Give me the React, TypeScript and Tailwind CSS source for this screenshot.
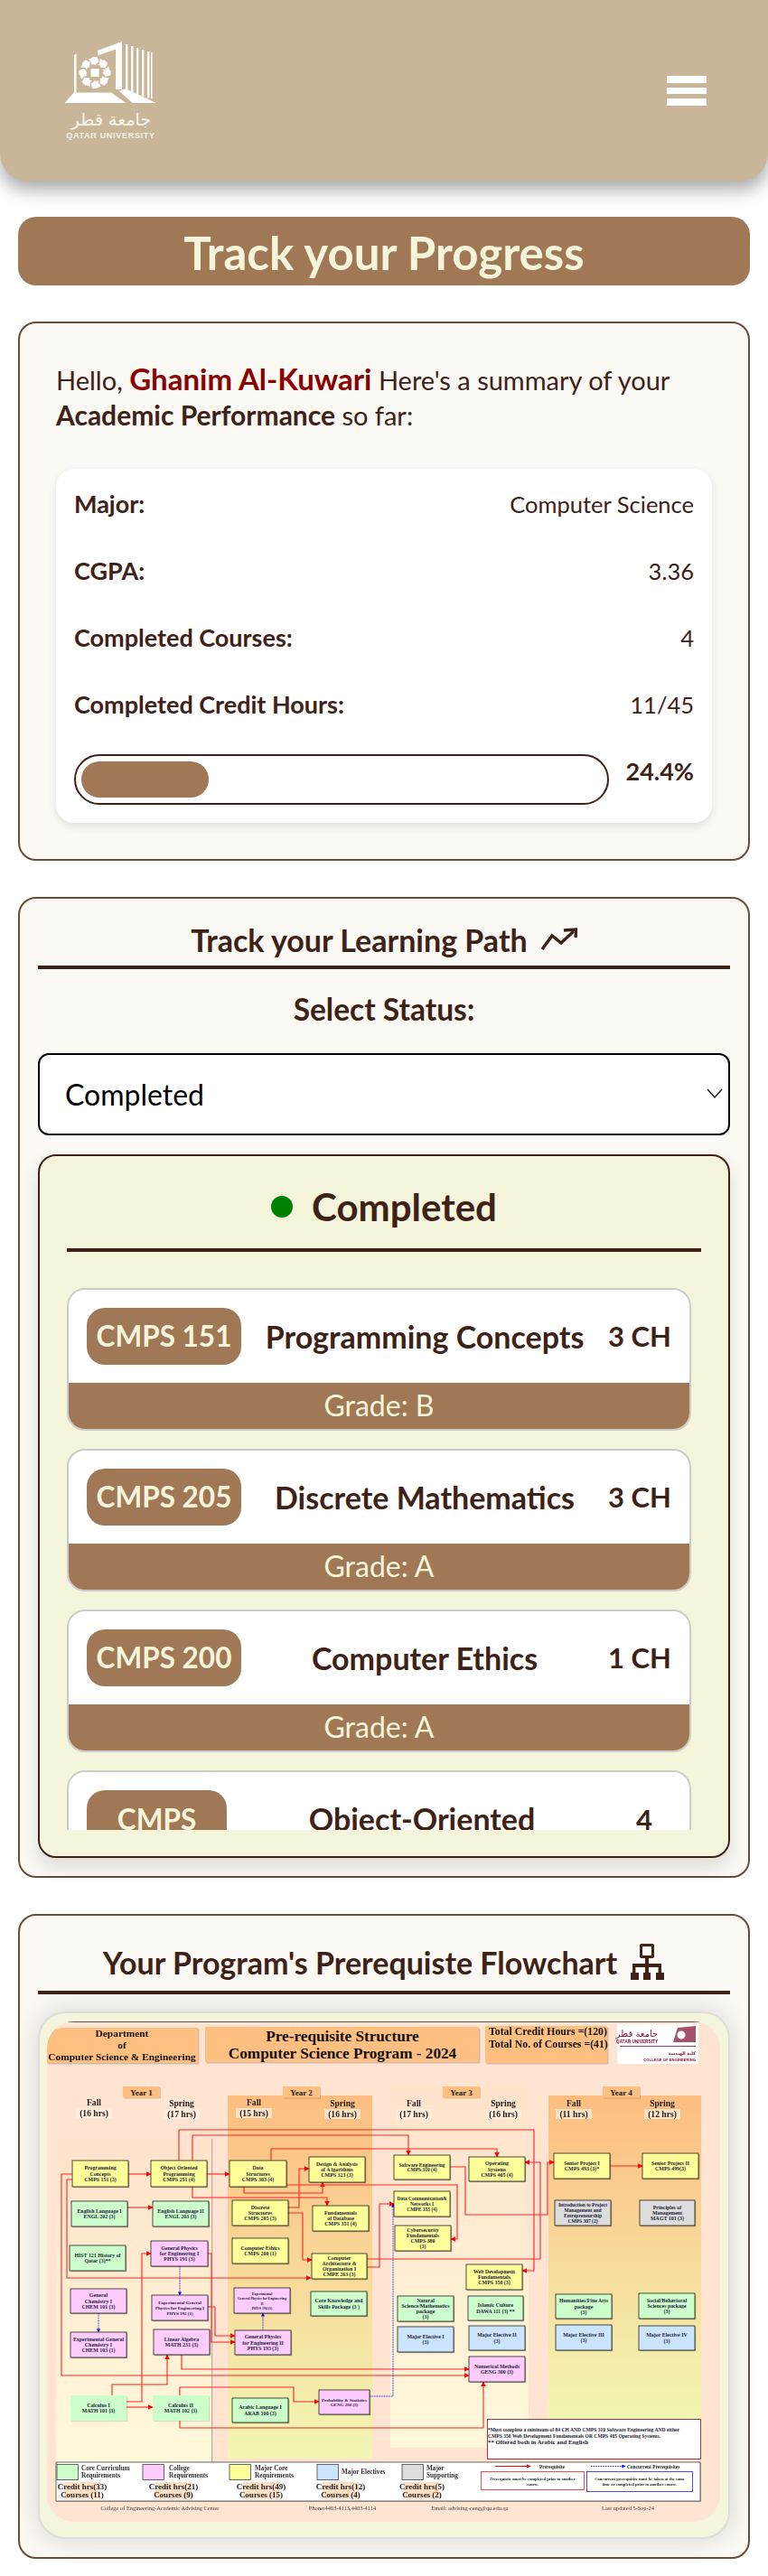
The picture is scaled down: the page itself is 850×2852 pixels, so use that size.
const courses = [
  { code: "CMPS 151", title: "Programming Concepts", ch: "3 CH", grade: "B" },
  { code: "CMPS 205", title: "Discrete Mathematics", ch: "3 CH", grade: "A" },
  { code: "CMPS 200", title: "Computer Ethics", ch: "1 CH", grade: "A" },
];

const stats = [
  { label: "Major:", value: "Computer Science" },
  { label: "CGPA:", value: "3.36" },
  { label: "Completed Courses:", value: "4" },
  { label: "Completed Credit Hours:", value: "11/45" },
];

const Y = "#FFFF99";
const G = "#CCFFCC";
const P = "#FFCCFF";
const B = "#CCE5FF";
const K = "#DDDDDD";

type Box = [number, number, number, number, string, string[], number?];

const boxes: Box[] = [
  [80, 2393, 142, 2422, Y, ["Programming", "Concepts", "CMPS 151 (3)"]],
  [167, 2393, 229, 2422, Y, ["Object Oriented", "Programming", "CMPS 251 (4)"]],
  [254, 2393, 317, 2422, Y, ["Data", "Structures", "CMPS 303 (4)"]],
  [342, 2389, 404, 2417, Y, ["Design & Analysis", "of A lgorithms", "CMPS 323 (3)"]],
  [79, 2438, 141, 2466, G, ["English Language I", "ENGL 202 (3)"]],
  [169, 2438, 231, 2466, G, ["English Language II", "ENGL 203 (3)"]],
  [257, 2437, 319, 2465, Y, ["Discrete", "Structures", "CMPS 205 (3)"]],
  [346, 2443, 408, 2471, Y, ["Fundamentals", "of Database", "CMPS 351 (4)"]],
  [77, 2487, 139, 2515, G, ["HIST 121 History of", "Qatar (3)**"]],
  [167, 2482, 230, 2510, P, ["General Physics", "for Engineering I", "PHYS 191 (3)"]],
  [257, 2479, 319, 2507, Y, ["Computer Ethics", "CMPS 200 (1)"]],
  [345, 2496, 406, 2524, Y, ["Computer", "Architecture &", "Organization I", "CMPE 263 (3)"]],
  [78, 2535, 140, 2562, P, ["General", "Chemistry I", "CHEM 101 (3)"]],
  [168, 2542, 230, 2570, P, ["Experimental General", "Physics for Engineering I", "PHYS 192 (1)"], 5],
  [259, 2534, 321, 2562, P, ["Experimental", "General Physics for Engineering", "II", "PHYS 194 (1)"], 3.9],
  [344, 2538, 406, 2565, G, ["Core Knowledge and", "Skills Package (3 )"]],
  [78, 2583, 140, 2611, P, ["Experimental General", "Chemistry I", "CHEM 103 (1)"]],
  [170, 2580, 232, 2608, P, ["Linear Algebra", "MATH 231 (3)"]],
  [260, 2581, 322, 2608, P, ["General Physics", "for Engineering II", "PHYS 193 (3)"]],
  [257, 2656, 319, 2683, G, ["Arabic Language I", "ARAB 100 (3)"]],
  [353, 2647, 409, 2674, P, ["Probability & Statistics", "GENG 200 (3)"], 5],
  [436, 2387, 498, 2414, Y, ["Software Engineering", "CMPS 310 (4)"], 5.5],
  [519, 2389, 581, 2416, Y, ["Operating", "Systems", "CMPS 405 (4)"]],
  [613, 2385, 675, 2413, Y, ["Senior Project I", "CMPS 493 (3)*"]],
  [711, 2385, 773, 2413, Y, ["Senior Project II", "CMPS 499(3)"]],
  [436, 2427, 498, 2455, Y, ["Data Communication&", "Networks I", "CMPE 355 (4)"], 5.5],
  [614, 2437, 676, 2465, K, ["Introduction to Project", "Management and", "Entrepreneurship", "CMPS 307 (2)"], 5.5],
  [708, 2437, 769, 2465, K, ["Principles of", "Management", "MAGT 101 (3)"]],
  [437, 2465, 499, 2493, Y, ["Cybersecurity", "Fundamentals", "CMPS 380", "(3)"]],
  [516, 2508, 578, 2536, Y, ["Web Development", "Fundamentals", "CMPS 350 (3)"]],
  [440, 2543, 502, 2571, G, ["Natural", "Science/Mathematics", "package", "(3)"]],
  [518, 2543, 579, 2570, G, ["Islamic Culture", "DAWA 111 (3) **"]],
  [615, 2541, 677, 2568, G, ["Humanities/Fine Arts", "package", "(3)"]],
  [707, 2540, 769, 2568, G, ["Social/Behavioral", "Sciences package", "(3)"]],
  [440, 2577, 502, 2605, B, ["Major Elective  I", "(3)"]],
  [519, 2576, 581, 2603, B, ["Major Elective  II", "(3)"]],
  [615, 2575, 677, 2603, B, ["Major Elective  III", "(3)"]],
  [707, 2576, 769, 2603, B, ["Major Elective  IV", "(3)"]],
  [519, 2610, 581, 2638, P, ["Numerical Methods", "GENG 300 (3)"]],
];

const softBoxes: Box[] = [
  [78, 2653, 140, 2681, G, ["Calculus I", "MATH 101 (3)"]],
  [169, 2653, 231, 2681, G, ["Calculus II", "MATH 102 (3)"]],
];

const redLines = [
  "142,2408 167,2408",
  "229,2408 254,2408",
  "141,2445 169,2445",
  "80,2408 68,2408 68,2631 519,2631",
  "80,2414 74,2414 74,2523 344,2523",
  "198,2393 198,2359 591,2359 591,2515 578,2515",
  "213,2393 213,2365 452,2365 452,2387",
  "213,2422 213,2434 362,2434 362,2443",
  "300,2393 300,2380 550,2380 550,2389",
  "270,2422 270,2429 357,2429 357,2417",
  "317,2420 506,2420 506,2480 499,2480",
  "319,2445 331,2445 331,2402 342,2402",
  "319,2451 335,2451 335,2503 345,2503",
  "406,2511 420,2511 420,2441 436,2441",
  "406,2502 598,2502 598,2395 581,2395",
  "498,2400 515,2400 515,2453 606,2453 606,2395 613,2395",
  "230,2496 234,2496 234,2594 260,2594",
  "230,2555 238,2555 238,2587 260,2587",
  "201,2608 201,2624 519,2624",
  "140,2660 157,2660 157,2496 167,2496",
  "124,2653 124,2641 185,2641 185,2608",
  "140,2666 169,2666",
  "199,2653 199,2644 325,2644 325,2660 353,2660",
  "199,2681 199,2689 535,2689 535,2638",
  "675,2399 711,2399",
];

const blueLines = [
  "199,2510 199,2542",
  "109,2562 109,2583",
  "291,2581 291,2562",
  "409,2654 435,2654 435,2441",
];

const semesters = [
  { x: 104, top: "Fall", hrs: "(16 hrs)", d: 0 },
  { x: 201, top: "Spring", hrs: "(17 hrs)", d: 1 },
  { x: 281, top: "Fall", hrs: "(15 hrs)", d: 0 },
  { x: 379, top: "Spring", hrs: "(16 hrs)", d: 1 },
  { x: 458, top: "Fall", hrs: "(17 hrs)", d: 1 },
  { x: 557, top: "Spring", hrs: "(16 hrs)", d: 1 },
  { x: 635, top: "Fall", hrs: "(11 hrs)", d: 1 },
  { x: 733, top: "Spring", hrs: "(12 hrs)", d: 1 },
];

const legend = [
  { x: 63, color: G, t: ["Core Curriculum", "Requirements"], tx: 90, c: 91, hrs: "Credit hrs(33)", n: "Courses (11)" },
  { x: 158, color: P, t: ["College", "Requirements"], tx: 187, c: 192, hrs: "Credit hrs(21)", n: "Courses (9)" },
  { x: 254, color: Y, t: ["Major Core", "Requirements"], tx: 282, c: 289, hrs: "Credit hrs(49)", n: "Courses (15)" },
  { x: 351, color: B, t: ["Major Electives"], tx: 378, c: 377, hrs: "Credit hrs(12)", n: "Courses (4)" },
  { x: 445, color: K, t: ["Major", "Supporting"], tx: 472, c: 467, hrs: "Credit hrs(5)", n: "Courses (2)" },
];

function FlowBox({ box, soft }: { box: Box; soft?: boolean }) {
  const [x1, y1, x2, y2, fill, lines, size] = box;
  const step = Math.max((size ?? 5.9) + 0.4, 5.6);
  const cy = (y1 + y2) / 2;
  return (
    <g>
      <rect x={x1 + 1.2} y={y1 + 1.2} width={x2 - x1} height={y2 - y1} fill="#000" opacity={soft ? 0.12 : 0.3} />
      <rect x={x1} y={y1} width={x2 - x1} height={y2 - y1} fill={fill} stroke={soft ? "none" : "#222"} strokeWidth={0.8} />
      {lines.map((line, i) => (
        <text
          key={line}
          x={(x1 + x2) / 2}
          y={cy + (i - (lines.length - 1) / 2) * step + 2}
          textAnchor="middle"
          fontSize={size ?? 5.9}
          fontWeight={700}
          fill="#1c1c3a"
        >
          {line}
        </text>
      ))}
    </g>
  );
}

function Flowchart() {
  return (
    <svg
      viewBox="52 2239 745 554"
      className="block h-[554px] w-[745px] rounded-[30px] blur-[0.3px]"
      fontFamily="'Liberation Serif', serif"
    >
      <defs>
        <linearGradient id="y1" x1="0" y1="0" x2="0" y2="1">
          <stop offset="0" stopColor="#FFE3CB" />
          <stop offset="1" stopColor="#FFF9DA" />
        </linearGradient>
        <linearGradient id="y2" x1="0" y1="0" x2="0" y2="1">
          <stop offset="0" stopColor="#FDBD80" />
          <stop offset="1" stopColor="#F2F7B4" />
        </linearGradient>
        <marker id="red" markerWidth="5" markerHeight="5" refX="4.5" refY="2.5" orient="auto">
          <path d="M0 0 L5 2.5 L0 5 Z" fill="#F00" />
        </marker>
        <marker id="blue" markerWidth="5" markerHeight="5" refX="4.5" refY="2.5" orient="auto">
          <path d="M0 0 L5 2.5 L0 5 Z" fill="#00F" />
        </marker>
      </defs>

      <rect x="52" y="2239" width="745" height="554" fill="#FFE4D1" />
      <line x1="72" y1="2239.4" x2="775" y2="2239.4" stroke="#333" strokeWidth="0.9" />

      <rect x="62" y="2369" width="172" height="358" fill="url(#y1)" />
      <rect x="234" y="2369" width="1.2" height="358" fill="#000" opacity="0.25" />
      <rect x="252" y="2321" width="160" height="402" fill="url(#y2)" />
      <rect x="432" y="2309" width="153" height="402" fill="url(#y1)" />
      <rect x="607" y="2321" width="169" height="359" fill="url(#y2)" />

      <rect x="53.5" y="2247.5" width="167" height="39" fill="#000" opacity="0.18" />
      <path d="M52 2285 V2264 Q52 2246 72 2246 H219 V2285 Z" fill="#FFBF80" />
      <g fontWeight={700} fontSize="11.4" textAnchor="middle" fill="#111">
        <text x="135" y="2256">Department</text>
        <text x="135" y="2269">of</text>
        <text x="135" y="2282">Computer Science &amp; Engineering</text>
      </g>

      <rect x="228.5" y="2246.5" width="303" height="39" fill="#000" opacity="0.18" />
      <rect x="227" y="2245" width="303" height="39" fill="#FFBF80" />
      <g fontWeight={700} fontSize="17.2" textAnchor="middle" fill="#111">
        <text x="379" y="2261">Pre-requisite Structure</text>
        <text x="379" y="2280">Computer Science Program - 2024</text>
      </g>

      <rect x="538.5" y="2245.5" width="135" height="41" fill="#000" opacity="0.18" />
      <rect x="537" y="2244" width="135" height="41" fill="#FFBF80" />
      <g fontWeight={700} fontSize="11.8" fill="#111">
        <text x="541" y="2254">Total Credit Hours =(120)</text>
        <text x="541" y="2268">Total No. of Courses =(41)</text>
      </g>

      <rect x="683" y="2242" width="90" height="44" fill="#FFF" />
      <text x="705" y="2256" textAnchor="middle" fontSize="10" fill="#8A1538" fontFamily="'DejaVu Sans', sans-serif">جامعة قطر</text>
      <text x="705" y="2262.5" textAnchor="middle" fontSize="4.8" fill="#8A1538" fontWeight={700} fontFamily="'Liberation Sans', sans-serif">QATAR UNIVERSITY</text>
      <path d="M745 2262 L750 2246 L770 2244 V2262 Z" fill="#8A1538" opacity="0.75" />
      <circle cx="754" cy="2254" r="4.5" fill="#FFF" />
      <rect x="686" y="2266" width="84" height="0.8" fill="#8A1538" />
      <text x="770" y="2276" textAnchor="end" fontSize="4.8" fill="#8A1538" fontWeight={700} fontFamily="'DejaVu Sans', sans-serif">كلية الهندسة</text>
      <text x="770" y="2283" textAnchor="end" fontSize="4.2" fill="#8A1538" fontWeight={700} fontFamily="'Liberation Sans', sans-serif">COLLEGE OF ENGINEERING</text>

      {[
        { x: 136, t: "Year 1" },
        { x: 313, t: "Year 2" },
        { x: 490, t: "Year 3" },
        { x: 667, t: "Year 4" },
      ].map((y) => (
        <g key={y.t}>
          <rect x={y.x + 1} y="2312" width="41" height="12.5" fill="#000" opacity="0.15" />
          <rect x={y.x} y="2311" width="41" height="12.5" fill="#FFBF80" />
          <text x={y.x + 20.5} y="2320.5" textAnchor="middle" fontSize="9" fontWeight={700} fill="#222">{y.t}</text>
        </g>
      ))}

      {semesters.map((s) => (
        <g key={s.x} fontWeight={700} fontSize="9.6" textAnchor="middle" fill="#222">
          <rect x={s.x - 20} y={2335 + s.d} width="40" height="11" fill="#FFEEDD" opacity="0.75" />
          <text x={s.x} y={2332 + s.d}>{s.top}</text>
          <text x={s.x} y={2343.5 + s.d}>{s.hrs}</text>
        </g>
      ))}

      <g fill="none" stroke="#F22" strokeWidth="1.1">
        {redLines.map((pts) => (
          <polyline key={pts} points={pts} markerEnd="url(#red)" />
        ))}
      </g>
      <g fill="none" stroke="#00F" strokeWidth="0.8" strokeDasharray="1 0.6">
        {blueLines.map((pts) => (
          <polyline key={pts} points={pts} markerEnd="url(#blue)" />
        ))}
      </g>

      {boxes.map((b) => (
        <FlowBox key={b[5][0] + b[0]} box={b} />
      ))}
      {softBoxes.map((b) => (
        <FlowBox key={b[5][0]} box={b} soft />
      ))}

      <rect x="539.5" y="2679.5" width="236" height="44" fill="#FFF" stroke="#A0202A" strokeWidth="0.9" />
      <g fontWeight={700} fill="#1c1c3a">
        <text x="540" y="2693" fontSize="5.6">*Must complete a minimum of 84 CH AND CMPS 310 Software Engineering AND either</text>
        <text x="540" y="2699.5" fontSize="5.6">CMPS 350 Web Development Fundamentals OR CMPS 405 Operating Systems.</text>
        <text x="540" y="2706.5" fontSize="6.8">** Offered both in Arabic and English</text>
      </g>

      <rect x="63" y="2728" width="713" height="43" fill="#000" opacity="0.25" />
      <rect x="62" y="2727" width="713" height="43" fill="#FFF" stroke="#444" strokeWidth="0.8" />
      {legend.map((l) => (
        <g key={l.x}>
          <rect x={l.x} y="2729.5" width="23.5" height="17" fill={l.color} stroke="#444" strokeWidth="0.8" />
          <g fontWeight={700} fontSize="7.2" fill="#333">
            {l.t.map((t, i) => (
              <text key={t} x={l.tx} y={(l.t.length === 1 ? 2740 : 2736) + i * 8}>{t}</text>
            ))}
          </g>
          <rect x={l.c - 20} y="2749" width="40" height="19" fill="#FFE0C4" />
          <g fontWeight={700} fontSize="9" textAnchor="middle" fill="#222">
            <text x={l.c} y="2756.5">{l.hrs}</text>
            <text x={l.c} y="2765.5">{l.n}</text>
          </g>
        </g>
      ))}

      <polyline points="548,2731.5 587,2731.5" stroke="#F00" strokeWidth="1" markerEnd="url(#red)" />
      <text x="597" y="2734" fontSize="5.4" fontWeight={700} fill="#222">Prerequisite</text>
      <polyline points="654,2731.5 692,2731.5" stroke="#00F" strokeWidth="0.8" strokeDasharray="1 0.6" markerEnd="url(#blue)" />
      <text x="694" y="2733.5" fontSize="5.4" fontWeight={700} fill="#222">Concurrent Prerequisites</text>
      <rect x="532.5" y="2737.5" width="114" height="20" fill="#FFF" stroke="#E22" strokeWidth="0.8" />
      <g fontSize="4.6" fontWeight={700} textAnchor="middle" fill="#222">
        <text x="589.5" y="2747">Prerequisite must be completed prior to another</text>
        <text x="589.5" y="2753">course.</text>
      </g>
      <rect x="649.5" y="2737.5" width="117" height="22" fill="#FFF" stroke="#22E" strokeWidth="0.8" />
      <g fontSize="4.6" fontWeight={700} textAnchor="middle" fill="#222">
        <text x="708" y="2747">Concurrent prerequisite must be taken at the same</text>
        <text x="708" y="2753">time or completed prior to another course.</text>
      </g>

      <g fontSize="6.4" textAnchor="middle" fill="#444">
        <text x="177" y="2780">College of Engineering-Academic Advising Center</text>
        <text x="379" y="2780">Phone:4403-4113,4403-4114</text>
        <text x="520" y="2780">Email: advising-ceng@qu.edu.qa</text>
        <text x="695" y="2780">Last updated 5-Sep-24</text>
      </g>
    </svg>
  );
}

function Logo() {
  const spokes = [0, 45, 90, 135, 180, 225, 270, 315];
  return (
    <svg viewBox="70 45 106 112" className="h-[112px] w-[106px]" fill="#FFF">
      <path d="M71.7 115 L81.7 103.5 L123.3 103.5 L139.3 115 Z" />
      <path d="M82 62 L84.5 60.5 V103.5 H82 Z" />
      <path d="M108 57 L135 47 V100 L128 100 V55.5 L108 62.5 Z" />
      <path d="M131.7 101.7 L139.3 99.3 L172.7 115 L146.7 115 Z" />
      {[139, 145, 151, 157, 163].map((x, i) => (
        <path key={x} d={`M${x} ${50 + i * 2} h2.4 V${103 + i * 1.6} h-2.4 Z`} />
      ))}
      <path d="M167 59 h1.5 V110 h-1.5 Z" />
      <g transform="translate(105 81.5)">
        {spokes.map((a) => (
          <g key={a} transform={`rotate(${a})`}>
            <path d="M-2.6 -17.5 L2.6 -17.5 L4.6 -12 L0 -8.6 L-4.6 -12 Z" />
            <path d="M5.4 -15.6 L9.4 -13.8 L7 -8 L3.4 -8.4 L5.6 -11 Z" />
          </g>
        ))}
        <rect x="-4.5" y="-4.5" width="9" height="9" />
      </g>
      <text x="123" y="140" textAnchor="middle" fontSize="19" fontFamily="'DejaVu Sans', sans-serif" opacity="0.85">جامعة قطر</text>
      <text x="122.5" y="154" textAnchor="middle" fontSize="9" fontWeight={700} letterSpacing="0.7" fontFamily="'Liberation Sans', sans-serif" opacity="0.8">QATAR UNIVERSITY</text>
    </svg>
  );
}

function TrendIcon() {
  return (
    <svg viewBox="598 1023 40 26" className="h-[26px] w-[40px]" fill="none" stroke="#3E2117" strokeWidth="3.4">
      <path d="M599 1047 L610 1032 L620 1040 L634 1027" />
      <path d="M623 1026 L637 1025 L636 1034" />
    </svg>
  );
}

function SitemapIcon() {
  return (
    <svg viewBox="694 2146 39 41" className="h-[41px] w-[39px]" fill="#3E2117">
      <path fillRule="evenodd" d="M707 2146 h12 a2 2 0 0 1 2 2 v12 a2 2 0 0 1 -2 2 h-12 a2 2 0 0 1 -2 -2 v-12 a2 2 0 0 1 2 -2 Z M708 2149 v10 h10 v-10 Z" />
      <rect x="711" y="2161" width="4" height="7" />
      <rect x="697" y="2168" width="32" height="4" />
      <rect x="697" y="2170" width="3.4" height="9" />
      <rect x="711" y="2170" width="4" height="9" />
      <rect x="725.6" y="2170" width="3.4" height="9" />
      <rect x="695" y="2178" width="9" height="8" />
      <rect x="709" y="2178" width="8" height="8" />
      <rect x="723" y="2178" width="9" height="8" />
    </svg>
  );
}

export default function App() {
  return (
    <div className="w-[850px] bg-white pb-5 text-[#3E2117] font-['Lato','Noto_Sans',sans-serif]">
      <header className="flex h-[200px] items-center justify-between rounded-b-[30px] bg-[#C9B699] pl-[70px] pr-[68px] shadow-[0_10px_20px_rgba(0,0,0,0.35)]">
        <Logo />
        <div className="flex flex-col gap-[5px]">
          <span className="block h-[8px] w-[44px] bg-white" />
          <span className="block h-[7px] w-[44px] bg-white" />
          <span className="block h-[8px] w-[44px] bg-white" />
        </div>
      </header>

      <main className="flex flex-col gap-10 px-5 pt-10">
        <h1 className="rounded-[20px] bg-[#A07855] pt-[3px] text-center text-[51px] leading-[73px] font-bold text-[#F5F5DC]">
          Track your Progress
        </h1>

        <section className="rounded-[20px] border-2 border-[#6B4C3B] bg-[#FAF9F3] p-10">
          <p className="pt-[3px] text-[29px] leading-[39px]">
            Hello, <b className="text-[33px] leading-none text-[#8B0000]">Ghanim Al-Kuwari</b> Here's a summary of your{" "}
            <b className="text-[30px] leading-none">Academic Performance</b> so far:
          </p>
          <div className="mt-[40px] rounded-[20px] bg-white px-5 pt-[2px] pb-5 shadow-[0_4px_10px_rgba(0,0,0,0.1)]">
            {stats.map((s) => (
              <div key={s.label} className="flex h-[74px] items-center justify-between">
                <span className="text-[27px] font-bold">{s.label}</span>
                <span className="text-[25.5px]">{s.value}</span>
              </div>
            ))}
            <div className="mt-[18px] flex items-start justify-between">
              <div className="h-[56px] w-[592px] rounded-[28px] border-2 border-[#3E2117] p-[6px]">
                <div className="h-full w-[24.4%] rounded-[20px] bg-[#A07855]" />
              </div>
              <span className="text-[27px] leading-[38px] font-bold">24.4%</span>
            </div>
          </div>
        </section>

        <section className="rounded-[20px] border-2 border-[#6B4C3B] bg-[#FAF9F3] p-5">
          <h2 className="flex h-[58px] items-center justify-center gap-[15px] border-b-4 border-[#3E2117] pb-1 text-[34px] font-bold">
            Track your Learning Path
            <TrendIcon />
          </h2>
          <p className="pt-5 pb-[25px] text-center text-[33.5px] leading-[48px] font-bold">Select Status:</p>
          <div className="relative">
            <select
              defaultValue="Completed"
              className="h-[91px] w-full appearance-none rounded-xl border-2 border-black bg-white pl-[28px] text-[32px] text-black"
            >
              <option>Completed</option>
              <option>In Progress</option>
              <option>Remaining</option>
            </select>
            <svg viewBox="0 0 18 11" className="pointer-events-none absolute top-[39px] right-[8px] h-[11px] w-[18px]" fill="none" stroke="#222" strokeWidth="1.5">
              <path d="M1 1 L9 10 L17 1" />
            </svg>
          </div>

          <div className="mt-[21px] rounded-[20px] border-2 border-[#3E2117] bg-[#F5F5DC] px-[30px] pb-[29px] shadow-[0_10px_20px_rgba(0,0,0,0.12)]">
            <h3 className="flex h-[106px] items-center justify-center gap-[21px] border-b-4 border-[#3E2117] pt-[10px] text-[42px] font-bold">
              <span className="h-6 w-6 rounded-full bg-[#008000]" />
              Completed
            </h3>
            <div className="mt-10 flex h-[600px] flex-col gap-5 overflow-hidden pr-[11px]">
              {courses.map((c) => (
                <article key={c.code} className="h-[158px] shrink-0 overflow-hidden rounded-[20px] border-2 border-[#CCC] bg-white">
                  <div className="flex h-[103px] items-center justify-between px-5">
                    <span className="w-[171px] rounded-[20px] bg-[#A07855] text-center text-[31.5px] leading-[63px] font-bold text-[#F5F5DC]">
                      {c.code}
                    </span>
                    <span className="flex-1 text-center text-[34px] font-bold">{c.title}</span>
                    <span className="text-[31px] font-bold">{c.ch}</span>
                  </div>
                  <p className="h-[51px] bg-[#A07855] text-center text-[32px] leading-[50px] text-[#F5F5DC]">Grade: {c.grade}</p>
                </article>
              ))}
              <article className="shrink-0 rounded-[20px] border-2 border-[#CCC] bg-white">
                <div className="flex items-start justify-between px-5 pt-5">
                  <span className="w-[155px] rounded-[20px] bg-[#A07855] px-2 py-[10px] text-center text-[31.5px] leading-[44px] font-bold text-[#F5F5DC]">
                    CMPS 250
                  </span>
                  <span className="flex-1 pt-[10px] text-center text-[34px] leading-[44px] font-bold">Object-Oriented Programming</span>
                  <span className="w-[60px] pt-[10px] text-center text-[31px] leading-[44px] font-bold">4 CH</span>
                </div>
              </article>
            </div>
          </div>
        </section>

        <section className="rounded-[20px] border-2 border-[#6B4C3B] bg-[#FAF9F3] p-5">
          <h2 className="flex h-[67px] items-center justify-center gap-[14px] border-b-4 border-[#3E2117] text-[34px] font-bold">
            Your Program's Prerequiste Flowchart
            <SitemapIcon />
          </h2>
          <div className="mt-[19px] rounded-[30px] border-2 border-[#DDD] bg-[#F5F5DC] px-2 pt-[9px] pb-[17px] shadow-[0_0_30px_rgba(0,0,0,0.15)]">
            <Flowchart />
          </div>
        </section>
      </main>
    </div>
  );
}
